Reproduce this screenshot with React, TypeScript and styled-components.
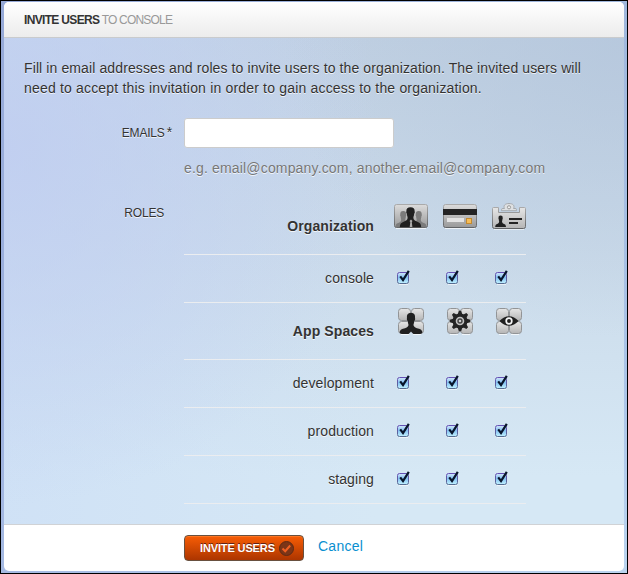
import React, { useState } from "react";
import styled, { createGlobalStyle, css } from "styled-components";

const GlobalStyle = createGlobalStyle`
  * { box-sizing: border-box; }
  body { margin: 0; background: #000; overflow: hidden; }
  body, button, input { font-family: "Liberation Sans", Arial, Helvetica, sans-serif; }
`;

const Frame = styled.div`
  width: 628px;
  height: 574px;
  border: 1px solid #000;
  padding: 1px 3px 2px;
  background: linear-gradient(90deg, rgba(140, 158, 210, 0.6), rgba(150, 178, 214, 0.3) 100%),
    linear-gradient(#a4b9df, #b5cdf0 70%, #cbe3fa);
`;

const Dialog = styled.section`
  display: flex;
  flex-direction: column;
  height: 569px;
  width: 620px;
  border-radius: 5px;
  overflow: hidden;
  background: #fff;
  color: #333;
  font-size: 14px;
  line-height: 20px;
`;

const Header = styled.header`
  flex: none;
  height: 36px;
  padding: 8px 20px 0;
  border-bottom: 1px solid #c9cbcd;
  background: linear-gradient(#fff, #ececec);
  font-size: 12px;
  line-height: 20px;
  color: #999;
`;

const Title = styled.h1`
  margin: 0;
  font: inherit;
  white-space: nowrap;
  letter-spacing: -0.8px;
  strong { color: #333; letter-spacing: -0.67px; }
`;

const Body = styled.div`
  flex: none;
  height: 487px;
  padding: 20px 20px 0;
  border-bottom: 1px solid #d0d2d5;
  text-shadow: 0 1px 0 rgba(255, 255, 255, 0.75);
  background:
    radial-gradient(ellipse 380px 360px at 0% 22%, rgba(190, 203, 240, 0.75), rgba(190, 203, 240, 0) 100%),
    radial-gradient(ellipse 340px 300px at 100% 0%, rgba(180, 198, 220, 0.75), rgba(180, 200, 222, 0) 100%),
    linear-gradient(90deg, rgba(204, 222, 246, 0.65), rgba(214, 232, 245, 0) 60%),
    linear-gradient(#c0d0e2, #cbdbea 45%, #d6e8f5 90%);
`;

const Intro = styled.p`
  margin: 0 0 20px;
  white-space: nowrap;
  letter-spacing: 0.11px;
`;

const IntroEnd = styled.span`
  letter-spacing: 0.18px;
`;

const Field = styled.div<{ $gap?: number }>`
  display: grid;
  grid-template-columns: 148px 362px;
  column-gap: 12px;
  margin-bottom: ${(p) => p.$gap ?? 0}px;
`;

const FieldLabel = styled.label<{ $end: number; $top: number }>`
  padding: ${(p) => p.$top}px ${(p) => p.$end}px 0 0;
  text-align: right;
  font-size: 12px;
  letter-spacing: -0.2px;
`;

const Required = styled.span`
  margin-left: -1px;
  font-size: 14px;
  line-height: 1;
`;

const EmailInput = styled.input`
  display: block;
  width: 210px;
  height: 30px;
  padding: 4px 6px;
  border: 1px solid #ccc;
  border-radius: 3px;
  outline: none;
  background: #fff;
  font-size: 14px;
`;

const Hint = styled.p`
  margin: 10px 0 0;
  color: #777;
  white-space: nowrap;
  letter-spacing: 0.165px;
`;

const RoleTable = styled.div`
  width: 342px;
`;

const RoleRow = styled.div<{ $height: number; $heading?: boolean }>`
  display: grid;
  grid-template-columns: 195px repeat(3, 34px);
  column-gap: 15px;
  height: ${(p) => p.$height}px;
  border-bottom: 1px solid #ebedf0;
  align-items: ${(p) => (p.$heading ? "start" : "center")};
  ${(p) => p.$heading && css`font-weight: bold;`}
`;

const RoleName = styled.div<{ $top?: number; $bottom?: number }>`
  padding: ${(p) => p.$top ?? 0}px 5px ${(p) => p.$bottom ?? 0}px 0;
  text-align: right;
  letter-spacing: 0.1px;
`;

const IconCell = styled.div<{ $top: number }>`
  display: flex;
  justify-content: center;
  padding-top: ${(p) => p.$top}px;
  svg { display: block; overflow: visible; }
`;

const CheckCell = styled.button`
  display: block;
  width: 16px;
  height: 18px;
  padding: 0;
  margin: 0 0 3px 2px;
  border: 0;
  background: none;
  svg { display: block; }
`;

const Footer = styled.footer`
  display: flex;
  align-items: flex-start;
  gap: 14px;
  padding: 10px 0 0 180px;
`;

const InviteButton = styled.button`
  display: flex;
  align-items: center;
  gap: 4px;
  width: 120px;
  height: 26px;
  padding: 0 0 0 15px;
  border: 1px solid #68503f;
  border-radius: 4px;
  background: linear-gradient(#f85d05, #ac3500);
  box-shadow: inset 0 1px 0 rgba(255, 130, 50, 0.65);
  color: #fff;
  font-size: 11px;
  font-weight: bold;
  letter-spacing: -0.13px;
  line-height: 20px;
  white-space: nowrap;
  text-shadow: 0 -1px 0 rgba(60, 20, 30, 0.8);
  svg { flex: none; display: block; }
`;

const Cancel = styled.a`
  margin-top: 1px;
  color: #0a8fd0;
  letter-spacing: 0.25px;
`;

const GradientStore = styled.svg`
  display: block;
`;

function Gradients() {
  return (
    <GradientStore width="0" height="0">
      <defs>
        <linearGradient id="metal" x2="0" y2="1">
          <stop stopColor="#dcdcdc" />
          <stop offset="1" stopColor="#999" />
        </linearGradient>
        <linearGradient id="tile" x2="0" y2="1">
          <stop stopColor="#e6e6e6" />
          <stop offset="1" stopColor="#b5b5b5" />
        </linearGradient>
        <linearGradient id="edge" x2="0" y2="1">
          <stop stopColor="#aaa" />
          <stop offset="1" stopColor="#626466" />
        </linearGradient>
        <linearGradient id="check" x2="0" y2="1">
          <stop stopColor="#d4e7fa" />
          <stop offset=".45" stopColor="#84c0f2" />
          <stop offset="1" stopColor="#c1f2ff" />
        </linearGradient>
        <linearGradient id="checkEdge" x2="0" y2="1">
          <stop stopColor="#6550b4" />
          <stop offset="1" stopColor="#576c91" />
        </linearGradient>
      </defs>
    </GradientStore>
  );
}

const PERSON =
  "M9 0C6.6 0 5.4 1.3 5.5 4C5.3 4.6 5.4 5.6 5.9 6C6 8 6.6 9 6.6 10.4C6.3 12.4 5 13.4 2.4 14.3C.8 15 .2 16 0 19H18C17.8 16 17.2 15 15.6 14.3C13 13.4 11.7 12.4 11.4 10.4C11.4 9 12 8 12.1 6C12.6 5.6 12.7 4.6 12.5 4C12.6 1.3 11.4 0 9 0Z";

function PeopleIcon() {
  return (
    <svg width="34" height="24" viewBox="0 0 34 24">
      <path d="M2 24.5H32" stroke="#fff" strokeOpacity=".7" />
      <rect x=".5" y=".5" width="33" height="23" rx="2" fill="url(#metal)" stroke="url(#edge)" />
      <g fill="#7b7b7b">
        <path transform="translate(1.5 7) scale(.86)" d={PERSON} />
        <path transform="translate(17 7) scale(.86)" d={PERSON} />
      </g>
      <path transform="translate(5.8 3.2) scale(1.19 1.05)" d={PERSON} fill="#202020" />
      <path d="M15.5 17L17 15.5L18.5 17L17.8 18L18.4 23H15.7L16.3 18Z" fill="#aaa" />
    </svg>
  );
}

function CardIcon() {
  return (
    <svg width="34" height="24" viewBox="0 0 34 24">
      <path d="M2 24.5H32" stroke="#fff" strokeOpacity=".7" />
      <rect x=".5" y=".5" width="33" height="23" rx="2" fill="url(#metal)" stroke="url(#edge)" />
      <path d="M0 5H34V11H0Z" fill="#242424" />
      <path d="M4 14H21V18H4Z" fill="#e3e3e3" />
      <rect x="23.5" y="14.5" width="5" height="5" fill="#f7bd57" stroke="#c38a30" />
    </svg>
  );
}

function BadgeIcon() {
  return (
    <svg width="34" height="26" viewBox="0 0 34 26">
      <path d="M2 26.3H32" stroke="#fff" strokeOpacity=".7" />
      <path
        d="M.5 5.5Q.5 4.5 1.5 4.5H6.5V9.5H27.5V4.5H32.5Q33.5 4.5 33.5 5.5V23.5Q33.5 25.5 31.5 25.5H2.5Q.5 25.5.5 23.5Z"
        fill="url(#tile)"
        stroke="url(#edge)"
      />
      <path
        d="M9.5 7.7V6.5Q9.5 5.5 11 5.5H12.5C11 2.5 13.2.5 17 .5S23 2.5 21.5 5.5H23Q24.5 5.5 24.5 6.5V7.7Z"
        fill="#dfe1e3"
        stroke="#a6aaae"
      />
      <circle cx="17" cy="4.3" r="1.6" fill="#eee" stroke="#999" />
      <path transform="translate(3.2 12.6) scale(.6)" d={PERSON} fill="#202020" />
      <path d="M17 15H30V17H17ZM17 19H26V21H17Z" fill="#242424" />
    </svg>
  );
}

function Tiles({ children }: { children: React.ReactNode }) {
  return (
    <svg width="26" height="26" viewBox="0 0 26 26">
      <path d="M3 26.5H11M15 26.5H23" stroke="#fff" strokeOpacity=".7" />
      <g fill="url(#tile)" stroke="#929496">
        <rect x=".5" y=".5" width="12" height="12" rx="3" />
        <rect x="13.5" y=".5" width="12" height="12" rx="3" />
        <rect x=".5" y="13.5" width="12" height="12" rx="3" />
        <rect x="13.5" y="13.5" width="12" height="12" rx="3" />
      </g>
      {children}
    </svg>
  );
}

function ManagerIcon() {
  return (
    <Tiles>
      <path
        d="M13 5C9.7 5 8.7 6.7 9 10C8.6 11 9 12.5 9.7 13C9.8 15 10.5 16 10.5 17.2C10 19.3 8 20 5 20.8C3 21.4 2 22.3 1.6 24.5Q2.5 26 4.5 26H10.5L13 23.5L15.5 26H21.5Q23.5 26 24.4 24.5C24 22.3 23 21.4 21 20.8C18 20 16 19.3 15.5 17.2C15.5 16 16.2 15 16.3 13C17 12.5 17.4 11 17 10C17.3 6.7 16.3 5 13 5Z"
        fill="#202020"
      />
    </Tiles>
  );
}

function GearIcon() {
  return (
    <Tiles>
      <g fill="#242424">
        {[0, 45, 90, 135, 180, 225, 270, 315].map((a) => (
          <path key={a} transform={`rotate(${a} 13 13)`} d="M10.5 7L11.8 2.8H14.2L15.5 7Z" />
        ))}
      </g>
      <circle cx="13" cy="13" r="5.9" fill="#c2c2c2" stroke="#242424" strokeWidth="3.2" />
      <circle cx="13" cy="13" r="2" fill="#ccc" stroke="#444" strokeWidth="1.4" />
    </Tiles>
  );
}

function EyeIcon() {
  return (
    <Tiles>
      <path d="M3.5 13C9 6.7 17 6.7 22.5 13C17 19.3 9 19.3 3.5 13Z" fill="#202020" />
      <circle cx="13" cy="13" r="2.8" fill="#202020" stroke="#f4f4f4" strokeWidth="1.7" />
    </Tiles>
  );
}

function Check({ label }: { label: string }) {
  const [on, setOn] = useState(true);
  return (
    <CheckCell type="button" role="checkbox" aria-checked={on} aria-label={label} onClick={() => setOn(!on)}>
      <svg width="16" height="18" viewBox="0 0 16 18">
        <path d="M3 16.5H12" stroke="#fff" strokeOpacity=".6" />
        <rect x="1.5" y="4.5" width="11" height="11" rx="2" fill="url(#check)" stroke="url(#checkEdge)" />
        {on && <path d="M4.2 8.4L7 12L12.8 2.8" fill="none" stroke="#08152b" strokeWidth="2.2" />}
      </svg>
    </CheckCell>
  );
}

function CheckRow({ name }: { name: string }) {
  return (
    <RoleRow $height={48}>
      <RoleName $bottom={2}>{name}</RoleName>
      {[1, 2, 3].map((n) => <Check key={n} label={`${name} role ${n}`} />)}
    </RoleRow>
  );
}

export default function App() {
  return (
    <Frame>
      <GlobalStyle />
      <Gradients />
      <Dialog>
        <Header>
          <Title><strong>INVITE USERS</strong> TO CONSOLE</Title>
        </Header>
        <Body>
          <Intro>
            Fill in email addresses and roles to invite users to the organization. The invited users will<br />
            <IntroEnd>need to accept this invitation in order to gain access to the organization.</IntroEnd>
          </Intro>
          <Field $gap={14}>
            <FieldLabel htmlFor="emails" $end={0} $top={5}>EMAILS <Required>*</Required></FieldLabel>
            <div>
              <EmailInput id="emails" />
              <Hint>e.g. email@company.com, another.email@company.com</Hint>
            </div>
          </Field>
          <Field>
            <FieldLabel as="div" $end={8} $top={11}>ROLES</FieldLabel>
            <RoleTable>
              <RoleRow $height={63} $heading>
                <RoleName $top={24}>Organization</RoleName>
                <IconCell $top={12}><PeopleIcon /></IconCell>
                <IconCell $top={12}><CardIcon /></IconCell>
                <IconCell $top={11}><BadgeIcon /></IconCell>
              </RoleRow>
              <CheckRow name="console" />
              <RoleRow $height={57} $heading>
                <RoleName $top={18}>App Spaces</RoleName>
                <IconCell $top={5}><ManagerIcon /></IconCell>
                <IconCell $top={5}><GearIcon /></IconCell>
                <IconCell $top={5}><EyeIcon /></IconCell>
              </RoleRow>
              <CheckRow name="development" />
              <CheckRow name="production" />
              <CheckRow name="staging" />
            </RoleTable>
          </Field>
        </Body>
        <Footer>
          <InviteButton type="button">
            INVITE USERS
            <svg width="15" height="15" viewBox="0 0 15 15">
              <circle cx="7.5" cy="7.5" r="7" fill="#7c3517" stroke="#5e2a15" />
              <path d="M3.5 7.5L6.2 10.2L11.2 4.5" fill="none" stroke="#f06022" strokeWidth="2" />
            </svg>
          </InviteButton>
          <Cancel>Cancel</Cancel>
        </Footer>
      </Dialog>
    </Frame>
  );
}
